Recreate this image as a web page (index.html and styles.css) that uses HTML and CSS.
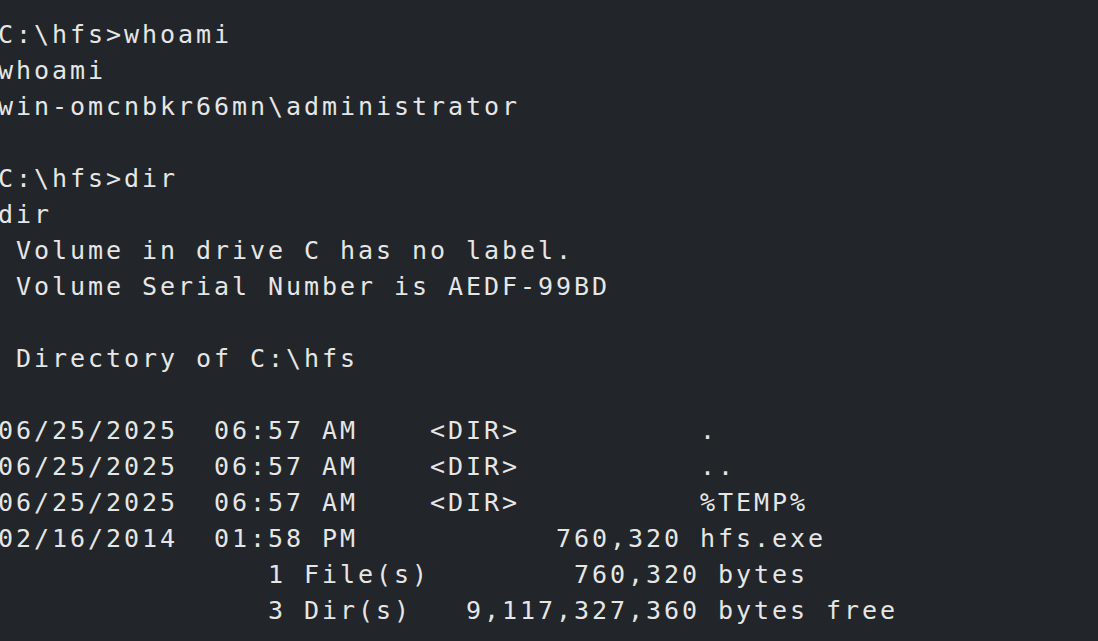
FILE: index.html
```html
<!DOCTYPE html>
<html lang="en">
<head>
<meta charset="utf-8">
<title>Terminal</title>
<link rel="stylesheet" href="styles.css">
</head>
<body>
<main class="terminal">
<pre class="output">C:\hfs&gt;whoami
whoami
win-omcnbkr66mn\administrator

C:\hfs&gt;dir
dir
 Volume in drive C has no label.
 Volume Serial Number is AEDF-99BD

 Directory of C:\hfs

06/25/2025  06:57 AM    &lt;DIR&gt;          .
06/25/2025  06:57 AM    &lt;DIR&gt;          ..
06/25/2025  06:57 AM    &lt;DIR&gt;          %TEMP%
02/16/2014  01:58 PM           760,320 hfs.exe
               1 File(s)        760,320 bytes
               3 Dir(s)   9,117,327,360 bytes free</pre>
</main>
</body>
</html>
```
FILE: styles.css
```css
html, body {
  margin: 0;
  padding: 0;
  background: #222529;
  height: 100%;
  overflow: hidden;
}

.terminal {
  padding: 17px 0 0 0;
  margin-left: -2px;
}

.output {
  margin: 0;
  font-family: "DejaVu Sans Mono", "Liberation Mono", monospace;
  font-size: 25px;
  line-height: 36px;
  letter-spacing: 2.95px;
  color: #e6e6e6;
  white-space: pre;
}
```
